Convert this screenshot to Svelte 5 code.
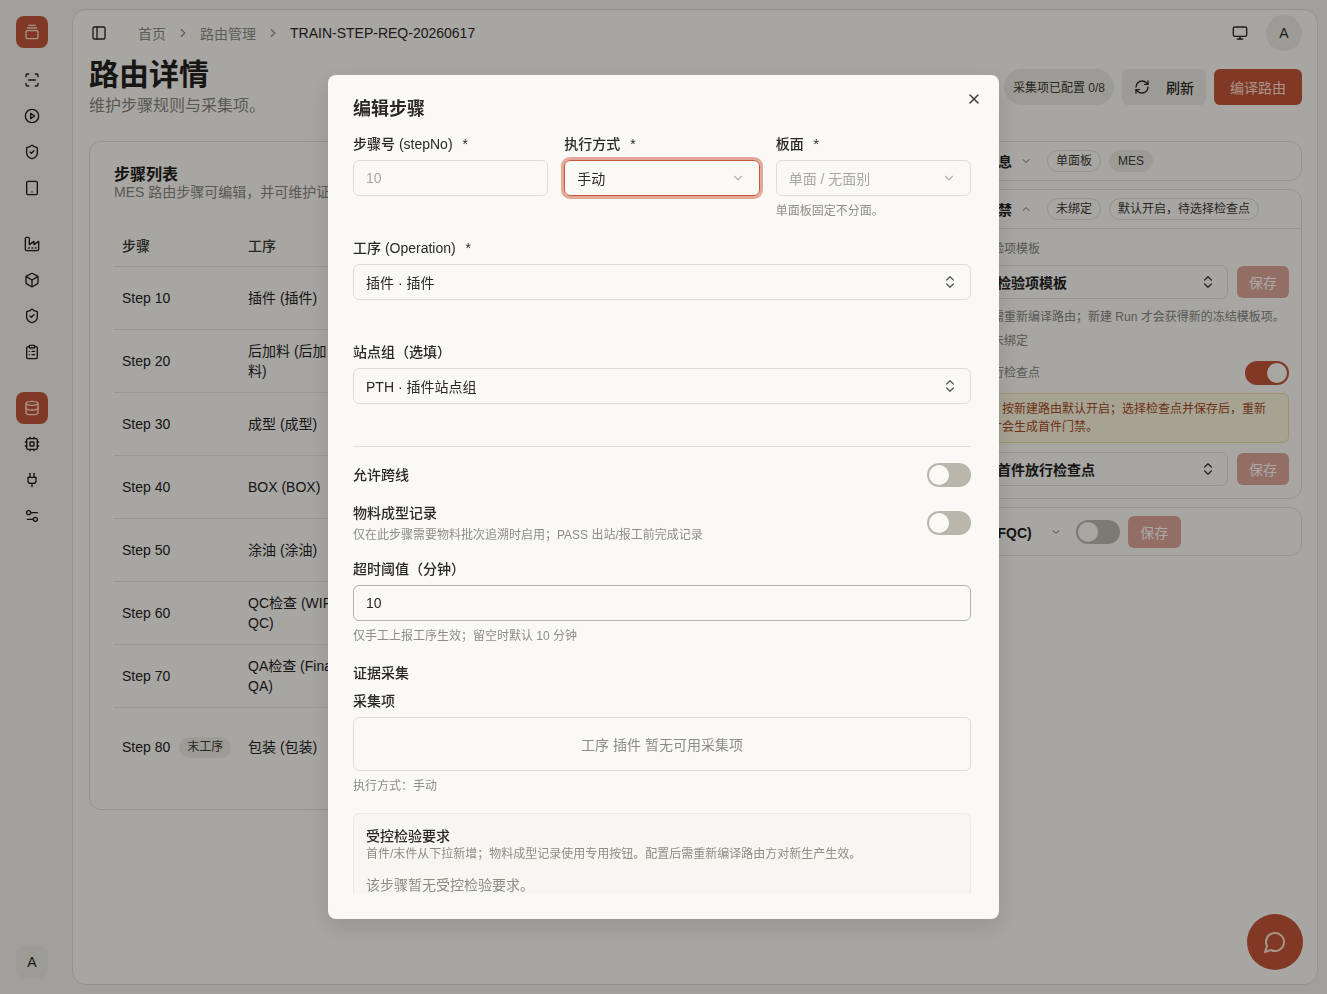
<script lang="ts">
  // Lucide-style icon bodies, rendered by the icon snippet below
  const icons: Record<string, string> = {
    logo: '<path d="M7 2h10"/><path d="M5 6h14"/><rect width="18" height="12" x="3" y="10" rx="2"/>',
    scan: '<path d="M3 7V5a2 2 0 0 1 2-2h2"/><path d="M17 3h2a2 2 0 0 1 2 2v2"/><path d="M21 17v2a2 2 0 0 1-2 2h-2"/><path d="M7 21H5a2 2 0 0 1-2-2v-2"/><path d="M7 12h10"/>',
    play: '<circle cx="12" cy="12" r="10"/><polygon points="10 8 16 12 10 16 10 8"/>',
    shield: '<path d="M20 13c0 5-3.5 7.5-7.66 8.95a1 1 0 0 1-.67-.01C7.5 20.5 4 18 4 13V6a1 1 0 0 1 1-1c2 0 4.5-1.2 6.24-2.72a1.17 1.17 0 0 1 1.52 0C14.51 3.81 17 5 19 5a1 1 0 0 1 1 1z"/><path d="m9 12 2 2 4-4"/>',
    tablet: '<rect width="16" height="20" x="4" y="2" rx="2"/><path d="M12 18h.01"/>',
    factory: '<path d="M2 20a2 2 0 0 0 2 2h16a2 2 0 0 0 2-2V8l-7 5V8l-7 5V4a2 2 0 0 0-2-2H4a2 2 0 0 0-2 2Z"/><path d="M17 18h1"/><path d="M12 18h1"/><path d="M7 18h1"/>',
    box: '<path d="M21 8a2 2 0 0 0-1-1.73l-7-4a2 2 0 0 0-2 0l-7 4A2 2 0 0 0 3 8v8a2 2 0 0 0 1 1.73l7 4a2 2 0 0 0 2 0l7-4A2 2 0 0 0 21 16Z"/><path d="m3.3 7 8.7 5 8.7-5"/><path d="M12 22V12"/>',
    clipboard: '<rect width="8" height="4" x="8" y="2" rx="1"/><path d="M16 4h2a2 2 0 0 1 2 2v14a2 2 0 0 1-2 2H6a2 2 0 0 1-2-2V6a2 2 0 0 1 2-2h2"/><path d="M12 11h4"/><path d="M12 16h4"/><path d="M8 11h.01"/><path d="M8 16h.01"/>',
    database: '<ellipse cx="12" cy="5" rx="9" ry="3"/><path d="M3 5V19A9 3 0 0 0 21 19V5"/><path d="M3 12A9 3 0 0 0 21 12"/>',
    cpu: '<rect width="16" height="16" x="4" y="4" rx="2"/><rect width="6" height="6" x="9" y="9" rx="1"/><path d="M15 2v2"/><path d="M15 20v2"/><path d="M2 15h2"/><path d="M2 9h2"/><path d="M20 15h2"/><path d="M20 9h2"/><path d="M9 2v2"/><path d="M9 20v2"/>',
    plug: '<path d="M12 22v-5"/><path d="M9 8V2"/><path d="M15 8V2"/><path d="M18 8v5a4 4 0 0 1-4 4h-4a4 4 0 0 1-4-4V8Z"/>',
    sliders: '<path d="M20 7h-9"/><path d="M14 17H5"/><circle cx="17" cy="17" r="3"/><circle cx="7" cy="7" r="3"/>',
    panel: '<rect width="18" height="18" x="3" y="3" rx="2"/><path d="M9 3v18"/>',
    monitor: '<rect width="20" height="14" x="2" y="3" rx="2"/><path d="M8 21h8"/><path d="M12 17v4"/>',
    refresh: '<path d="M3 12a9 9 0 0 1 9-9 9.75 9.75 0 0 1 6.74 2.74L21 8"/><path d="M21 3v5h-5"/><path d="M21 12a9 9 0 0 1-9 9 9.75 9.75 0 0 1-6.74-2.74L3 16"/><path d="M8 16H3v5"/>',
    chat: '<path d="M7.9 20A9 9 0 1 0 4 16.1L2 22Z"/>',
    updown: '<path d="m7 15 5 5 5-5"/><path d="m7 9 5-5 5 5"/>',
    down: '<path d="m6 9 6 6 6-6"/>',
    up: '<path d="m18 15-6-6-6 6"/>',
    right: '<path d="m9 18 6-6-6-6"/>',
    x: '<path d="M18 6 6 18"/><path d="m6 6 12 12"/>'
  };

  const navGroups = [
    ['scan', 'play', 'shield', 'tablet'],
    ['factory', 'box', 'shield', 'clipboard'],
    ['database', 'cpu', 'plug', 'sliders']
  ];

  const steps = [
    { no: 'Step 10', op: '插件 (插件)', group: 'PTH · 插件站点组', mode: '手动' },
    { no: 'Step 20', op: '后加料 (后加料)', group: 'PTH · 后加料站点组', mode: '手动' },
    { no: 'Step 30', op: '成型 (成型)', group: 'PTH · 成型站点组', mode: '手动' },
    { no: 'Step 40', op: 'BOX (BOX)', group: 'PTH · BOX 站点组', mode: '手动' },
    { no: 'Step 50', op: '涂油 (涂油)', group: 'PTH · 涂油站点组', mode: '手动' },
    { no: 'Step 60', op: 'QC检查 (WIP QC)', group: 'QC 站点组', mode: '手动' },
    { no: 'Step 70', op: 'QA检查 (Final QA)', group: 'QA 站点组', mode: '手动' },
    { no: 'Step 80', op: '包装 (包装)', group: '包装站点组', mode: '手动', last: true }
  ];
</script>

{#snippet icon(name: string, size = 16)}
  <svg class="icon" width={size} height={size} viewBox="0 0 24 24" fill="none" stroke="currentColor" stroke-width="2" stroke-linecap="round" stroke-linejoin="round" aria-hidden="true">{@html icons[name]}</svg>
{/snippet}

<div class="shell">
  <!-- Icon rail -->
  <aside class="rail">
    <div class="rail-logo">{@render icon('logo')}</div>
    <div class="rail-groups">
      {#each navGroups as group, g}
        <div class="rail-group">
          {#each group as name, i}
            <div class="rail-item" class:active={g === 2 && i === 0}>{@render icon(name)}</div>
          {/each}
        </div>
      {/each}
    </div>
    <div class="rail-user">A</div>
  </aside>

  <main class="main">
    <header class="topbar">
      <nav class="crumbs">
        <span class="crumb-toggle">{@render icon('panel')}</span>
        <span class="crumb">首页</span>
        <span class="crumb-sep">{@render icon('right', 14)}</span>
        <span class="crumb">路由管理</span>
        <span class="crumb-sep">{@render icon('right', 14)}</span>
        <span class="crumb-current">TRAIN-STEP-REQ-20260617</span>
      </nav>
      <div class="topbar-right">
        <span class="monitor">{@render icon('monitor')}</span>
        <span class="avatar">A</span>
      </div>
    </header>

    <section class="page-head">
      <div>
        <h1>路由详情</h1>
        <p>维护步骤规则与采集项。</p>
      </div>
      <div class="page-actions">
        <span class="status-pill">采集项已配置 0/8</span>
        <button class="btn btn-soft">{@render icon('refresh')}<span>刷新</span></button>
        <button class="btn btn-primary">编译路由</button>
      </div>
    </section>

    <div class="columns">
      <!-- Steps table -->
      <section class="steps-card">
        <h2>步骤列表</h2>
        <p class="steps-sub">MES 路由步骤可编辑，并可维护证据采集项。</p>
        <div class="steps-table">
          <div class="steps-row steps-header">
            <span>步骤</span><span>工序</span><span>站点组</span><span>执行方式</span>
          </div>
          {#each steps as s}
            <div class="steps-row" class:last={s.last}>
              <span class="step-no">{s.no}{#if s.last}<em class="tag">末工序</em>{/if}</span>
              <span>{s.op}</span>
              <span>{s.group}</span>
              <span>{s.mode}</span>
            </div>
          {/each}
        </div>
      </section>

      <!-- Route settings -->
      <div class="side">
        <section class="panel panel-row">
          <strong>基础信息</strong>
          <span class="chev">{@render icon('down', 12)}</span>
          <span class="chip chip-first">单面板</span>
          <span class="chip chip-fill">MES</span>
        </section>

        <section class="panel">
          <div class="panel-head">
            <strong>首件门禁</strong>
            <span class="chev">{@render icon('up', 12)}</span>
            <span class="chip chip-first">未绑定</span>
            <span class="chip">默认开启，待选择检查点</span>
          </div>
          <div class="panel-body">
            <div class="small-label">绑定检验项模板</div>
            <div class="pick-row">
              <div class="pick"><b>选择检验项模板</b>{@render icon('updown')}</div>
              <button class="btn-save">保存</button>
            </div>
            <p class="small-note first-note">保存后需重新编译路由；新建 Run 才会获得新的冻结模板项。</p>
            <p class="small-note">当前：未绑定</p>
            <div class="gate-row">
              <span class="small-label">首件放行检查点</span>
              <span class="switch on"><i></i></span>
            </div>
            <div class="warn">当前，按新建路由默认开启；选择检查点并保存后，重新编译才会生成首件门禁。</div>
            <div class="pick-row last-pick">
              <div class="pick"><b>选择首件放行检查点</b>{@render icon('updown')}</div>
              <button class="btn-save">保存</button>
            </div>
          </div>
        </section>

        <section class="panel panel-fqc">
          <strong>终检 (FQC)</strong>
          <span class="chev chev-fqc">{@render icon('down', 12)}</span>
          <span class="switch"><i></i></span>
          <button class="btn-save">保存</button>
        </section>
      </div>
    </div>
  </main>

  <button class="fab" aria-label="chat">{@render icon('chat', 24)}</button>

  <!-- Edit dialog -->
  <div class="overlay">
    <div class="modal" role="dialog" aria-modal="true">
      <button class="modal-close" aria-label="close">{@render icon('x')}</button>
      <h3>编辑步骤</h3>
      <div class="modal-body">
        <div class="grid3">
          <div class="field">
            <label>步骤号 (stepNo) <i>*</i></label>
            <div class="control disabled">10</div>
          </div>
          <div class="field">
            <label>执行方式 <i>*</i></label>
            <div class="control focused"><span>手动</span><span class="ctl-icon">{@render icon('down', 14)}</span></div>
          </div>
          <div class="field">
            <label>板面 <i>*</i></label>
            <div class="control disabled"><span>单面 / 无面别</span><span class="ctl-icon">{@render icon('down', 14)}</span></div>
            <div class="hint">单面板固定不分面。</div>
          </div>
        </div>

        <div class="field">
          <label>工序 (Operation) <i>*</i></label>
          <div class="control"><span>插件 · 插件</span><span class="ctl-icon dark">{@render icon('updown')}</span></div>
        </div>

        <div class="field">
          <label>站点组（选填）</label>
          <div class="control"><span>PTH · 插件站点组</span><span class="ctl-icon dark">{@render icon('updown')}</span></div>
        </div>

        <hr />

        <div class="toggle-row first">
          <span class="toggle-title">允许跨线</span>
          <span class="switch"><i></i></span>
        </div>
        <div class="toggle-row tall">
          <div>
            <div class="toggle-title">物料成型记录</div>
            <div class="toggle-note">仅在此步骤需要物料批次追溯时启用；PASS 出站/报工前完成记录</div>
          </div>
          <span class="switch"><i></i></span>
        </div>

        <div class="timeout">
          <label>超时阈值（分钟）</label>
          <div class="control strong">10</div>
          <div class="hint">仅手工上报工序生效；留空时默认 10 分钟</div>
        </div>

        <div class="evidence">
          <div class="evidence-title">证据采集</div>
          <label>采集项</label>
          <div class="empty-box">工序 插件 暂无可用采集项</div>
          <div class="hint">执行方式：手动</div>
        </div>

        <div class="req-box">
          <div class="req-title">受控检验要求</div>
          <div class="req-desc">首件/末件从下拉新增；物料成型记录使用专用按钮。配置后需重新编译路由方对新生产生效。</div>
          <div class="req-empty">该步骤暂无受控检验要求。</div>
        </div>
      </div>
    </div>
  </div>
</div>

<style>
  :global(body) {
    margin: 0;
    background: #f0eee6;
    color: #1f1d19;
    font-family: 'Liberation Sans', 'Noto Sans CJK SC', sans-serif;
    font-size: 14px;
  }

  .shell {
    display: flex;
    height: 100vh;
    overflow: hidden;
  }

  .icon {
    display: block;
    flex: none;
  }

  button {
    font-family: inherit;
    border: none;
    padding: 0;
  }

  /* ── Rail ─────────────────────────────────────────────────── */
  .rail {
    width: 72px;
    flex: none;
    box-sizing: border-box;
    padding: 16px 16px;
    display: flex;
    flex-direction: column;
  }

  .rail-logo,
  .rail-item,
  .rail-user {
    width: 32px;
    height: 32px;
    border-radius: 8px;
    display: flex;
    align-items: center;
    justify-content: center;
  }

  .rail-logo,
  .rail-item.active {
    background: #c0553a;
    color: #fbdcd0;
  }

  .rail-groups {
    flex: 1;
    margin-top: 16px;
    display: flex;
    flex-direction: column;
    gap: 24px;
  }

  .rail-group {
    display: flex;
    flex-direction: column;
    gap: 4px;
  }

  .rail-user {
    background: #ebe8e0;
    font-size: 14px;
  }

  /* ── Main ─────────────────────────────────────────────────── */
  .main {
    flex: 1;
    min-width: 0;
    margin: 9px 9px 9px 0;
    box-sizing: border-box;
    padding: 5px 15px 0 16px;
    background: #faf8f3;
    border: 1px solid #dedbd2;
    border-radius: 14px;
  }

  .topbar {
    display: flex;
    align-items: center;
    justify-content: space-between;
    height: 36px;
  }

  .crumbs {
    display: flex;
    align-items: center;
    gap: 10px;
    color: #8c8a82;
  }

  .crumb-toggle {
    margin: 0 21px 0 2px;
    color: #2b2924;
  }

  .crumb-current {
    color: #2b2924;
  }

  .topbar-right {
    display: flex;
    align-items: center;
    gap: 18px;
  }

  .monitor {
    color: #2b2924;
  }

  .avatar {
    width: 36px;
    height: 36px;
    border-radius: 50%;
    background: #eae7df;
    display: flex;
    align-items: center;
    justify-content: center;
    color: #2b2924;
  }

  .page-head {
    margin-top: 5px;
    display: flex;
    align-items: center;
    justify-content: space-between;
  }

  h1 {
    margin: 1px 0 0;
    font-size: 30px;
    line-height: 36px;
    font-weight: 700;
    color: #24221d;
  }

  .page-head p {
    margin: 1px 0 0;
    font-size: 16px;
    line-height: 24px;
    color: #85837b;
  }

  .page-actions {
    display: flex;
    align-items: center;
    gap: 8px;
    margin-bottom: 1px;
  }

  .status-pill {
    height: 36px;
    box-sizing: border-box;
    padding: 0 9px;
    border-radius: 18px;
    background: #eae7df;
    font-size: 12px;
    color: #3b3932;
    display: flex;
    align-items: center;
  }

  .btn {
    height: 36px;
    border-radius: 6px;
    font-size: 14px;
    display: flex;
    align-items: center;
    padding: 0 12px;
  }

  .btn-soft {
    gap: 16px;
    background: #eae7df;
    color: #2b2924;
    font-weight: 500;
  }

  .btn-primary {
    width: 88px;
    justify-content: center;
    background: #c0553a;
    color: #fbdcd0;
    padding: 0;
  }

  .columns {
    margin-top: 23px;
    display: grid;
    grid-template-columns: 1fr 357px;
    gap: 16px;
    align-items: start;
  }

  /* ── Steps card ───────────────────────────────────────────── */
  .steps-card {
    height: 669px;
    box-sizing: border-box;
    padding: 24px 24px;
    border: 1px solid #dedbd2;
    border-radius: 12px;
  }

  h2 {
    margin: 0;
    font-size: 16px;
    line-height: 18px;
    font-weight: 700;
  }

  .steps-sub {
    margin: 0;
    line-height: 16px;
    color: #85837b;
  }

  .steps-table {
    margin-top: 26px;
  }

  .steps-row {
    display: grid;
    grid-template-columns: 126px 104px 1fr 120px;
    align-items: center;
    min-height: 62px;
    padding: 0;
    border-bottom: 1px solid #e4e1d8;
    line-height: 20px;
    color: #24221d;
  }

  .steps-row span {
    padding: 0 8px;
  }

  .steps-header {
    min-height: 40px;
    font-weight: 500;
    color: #3b3932;
  }

  .steps-row.last {
    min-height: 78px;
    border-bottom: none;
  }

  .step-no {
    display: flex;
    align-items: center;
    white-space: nowrap;
  }

  .tag {
    margin-left: 9px;
    height: 21px;
    padding: 0 8px;
    border-radius: 11px;
    background: #eae7df;
    font-size: 12px;
    font-style: normal;
    line-height: 21px;
    color: #3b3932;
  }

  /* ── Side panels ──────────────────────────────────────────── */
  .side {
    display: flex;
    flex-direction: column;
    gap: 8px;
  }

  .panel {
    border: 1px solid #dedbd2;
    border-radius: 12px;
  }

  .panel-row,
  .panel-head {
    display: flex;
    align-items: center;
    padding: 0 10px;
  }

  .panel-row {
    height: 38px;
  }

  .panel-head {
    height: 38px;
    border-bottom: 1px solid #dedbd2;
  }

  .chev {
    margin-left: 8px;
    color: #6e6c65;
  }

  .chip {
    margin-left: 8px;
    height: 20px;
    box-sizing: content-box;
    padding: 0 8px;
    border: 1px solid #dedbd2;
    border-radius: 11px;
    font-size: 12px;
    line-height: 20px;
    color: #3b3932;
  }

  .chip-first {
    margin-left: 15px;
  }

  .chip-fill {
    background: #eae7df;
    border-color: #eae7df;
  }

  .panel-body {
    padding: 12px 12px 12px 10px;
  }

  .small-label {
    font-size: 12px;
    line-height: 16px;
    color: #85837b;
  }

  .pick-row {
    margin-top: 8px;
    display: flex;
    align-items: center;
    gap: 9px;
  }

  .pick {
    flex: 1;
    height: 34px;
    box-sizing: border-box;
    padding: 0 11px 0 12px;
    border: 1px solid #dedbd2;
    border-radius: 7px;
    display: flex;
    align-items: center;
    justify-content: space-between;
    color: #3b3932;
  }

  .pick b {
    color: #24221d;
    font-weight: 600;
  }

  .btn-save {
    width: 52px;
    height: 32px;
    flex: none;
    border-radius: 6px;
    background: #c0553a;
    opacity: 0.5;
    color: #fff;
    font-size: 14px;
  }

  .small-note {
    margin: 8px 0 0;
    font-size: 12px;
    line-height: 16px;
    color: #85837b;
  }

  .small-note.first-note {
    margin-top: 10px;
  }

  .gate-row {
    margin-top: 12px;
    display: flex;
    align-items: center;
    justify-content: space-between;
  }

  .warn {
    margin-top: 8px;
    padding: 6px 14px 6px 9px;
    border: 1px solid #ecd9a2;
    border-radius: 6px;
    background: #faf3dc;
    font-size: 12px;
    line-height: 18px;
    color: #a24a1c;
  }

  .last-pick {
    margin-top: 9px;
  }

  .panel-fqc {
    height: 47px;
    display: flex;
    align-items: center;
    padding: 0 0 0 15px;
  }

  .chev-fqc {
    margin: 0 14px 0 18px;
  }

  .panel-fqc .btn-save {
    margin-left: 8px;
    width: 53px;
  }

  .switch {
    width: 44px;
    height: 24px;
    flex: none;
    box-sizing: border-box;
    padding: 2px;
    border-radius: 12px;
    background: #b9b7ab;
    display: flex;
  }

  .switch i {
    width: 20px;
    height: 20px;
    border-radius: 50%;
    background: #fbf9f5;
  }

  .switch.on {
    background: #c0553a;
    justify-content: flex-end;
  }

  .fab {
    position: fixed;
    right: 24px;
    bottom: 24px;
    width: 56px;
    height: 56px;
    border-radius: 50%;
    background: #c0553a;
    color: #fbdcd0;
    display: flex;
    align-items: center;
    justify-content: center;
  }

  /* ── Dialog ───────────────────────────────────────────────── */
  .overlay {
    position: fixed;
    inset: 0;
    background: rgba(0, 0, 0, 0.33);
    display: flex;
    align-items: center;
    justify-content: center;
  }

  .modal {
    position: relative;
    width: 671px;
    height: 844px;
    box-sizing: border-box;
    padding: 25px 28px 25px 25px;
    background: #fbf9f5;
    border-radius: 8px;
    box-shadow: 0 8px 24px rgba(0, 0, 0, 0.12);
    display: flex;
    flex-direction: column;
    color: #2b2924;
  }

  .modal-close {
    position: absolute;
    top: 16px;
    right: 17px;
    background: none;
    color: #3b3932;
  }

  h3 {
    margin: 0 0 16px;
    font-size: 18px;
    line-height: 18px;
    font-weight: 600;
    flex: none;
  }

  .modal-body {
    flex: 1;
    min-height: 0;
    overflow: hidden;
  }

  .grid3 {
    display: grid;
    grid-template-columns: repeat(3, 1fr);
    gap: 16px;
  }

  .field {
    min-height: 104px;
  }

  .grid3 .field {
    margin-bottom: 0;
  }

  label {
    display: block;
    height: 20px;
    margin-bottom: 6px;
    line-height: 20px;
    font-weight: 500;
    color: #2b2924;
  }

  label i {
    font-style: normal;
    margin-left: 6px;
  }

  .control {
    height: 36px;
    box-sizing: border-box;
    padding: 0 12px 1px;
    border: 1px solid #e0ddd6;
    border-radius: 6px;
    display: flex;
    align-items: center;
    justify-content: space-between;
    color: #2b2924;
  }

  .control.disabled {
    color: #a9a7a0;
  }

  .control.focused {
    border-color: #c55a3e;
    box-shadow: 0 0 0 3px #e5a898;
  }

  .control.strong {
    border-color: #b5b3ab;
  }

  .ctl-icon {
    color: #b5b3ab;
    margin-right: 2px;
  }

  .ctl-icon.dark {
    color: #5c5a53;
    margin-right: 0;
  }

  .hint {
    margin-top: 7px;
    font-size: 12px;
    line-height: 16px;
    color: #8e8c84;
  }

  hr {
    margin: 0;
    border: none;
    border-top: 1px solid #e0ddd6;
  }

  .toggle-row {
    display: flex;
    align-items: center;
    justify-content: space-between;
  }

  .toggle-row.first {
    margin-top: 16px;
  }

  .toggle-row.tall {
    margin-top: 16px;
  }

  .toggle-title {
    line-height: 20px;
    font-weight: 500;
  }

  .toggle-note {
    margin-top: 4px;
    font-size: 12px;
    line-height: 16px;
    color: #8e8c84;
  }

  .timeout {
    margin-top: 16px;
  }

  .evidence {
    margin-top: 19px;
  }

  .evidence-title {
    line-height: 20px;
    font-weight: 500;
    margin-bottom: 8px;
  }

  .empty-box {
    height: 54px;
    box-sizing: border-box;
    border: 1px solid #e0ddd6;
    border-radius: 6px;
    display: flex;
    align-items: center;
    justify-content: center;
    color: #8e8c84;
  }

  .req-box {
    margin-top: 19px;
    padding: 12px;
    height: 160px;
    border: 1px solid #ece9e2;
    border-radius: 6px;
    background: #f8f6f1;
  }

  .req-title {
    line-height: 20px;
    font-weight: 500;
  }

  .req-desc {
    font-size: 12px;
    line-height: 16px;
    color: #8e8c84;
  }

  .req-empty {
    margin-top: 13px;
    line-height: 20px;
    color: #8e8c84;
  }
</style>
